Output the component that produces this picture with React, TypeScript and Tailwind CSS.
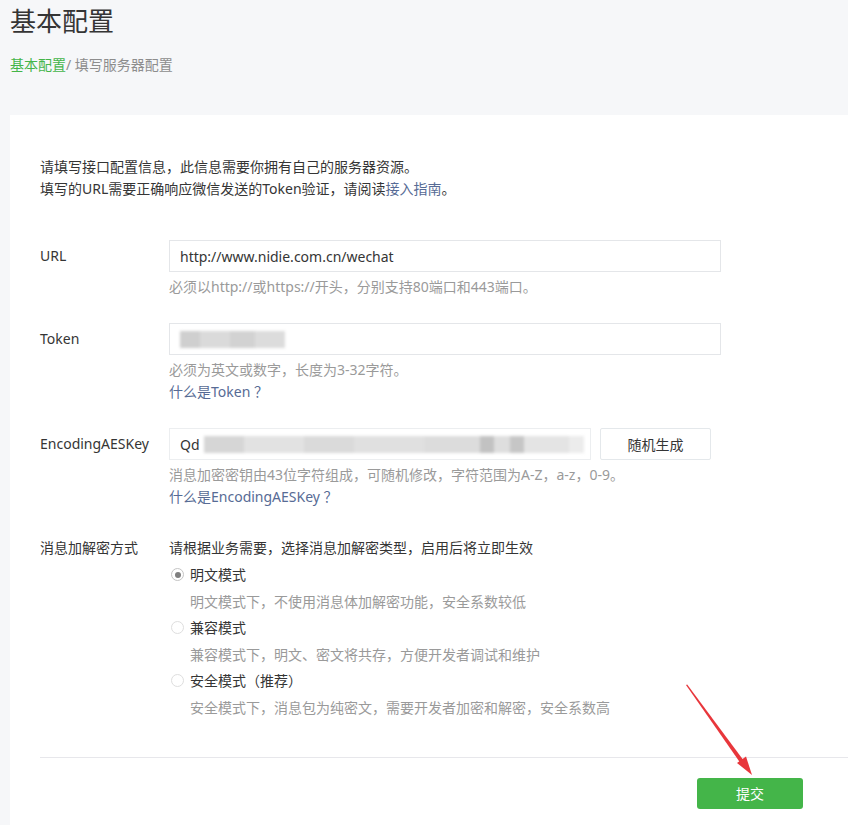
import React from 'react';

const font = { fontFamily: '"Noto Sans", "Noto Sans CJK SC", sans-serif' };

const Radio: React.FC<{ checked?: boolean; label: string; desc: string }> = ({ checked, label, desc }) => (
  <>
    <div className="h-[27px] flex items-center text-[#353535]">
      <span
        className={`w-[13px] h-[13px] rounded-full border flex items-center justify-center mr-[6px] ml-[2px] bg-white ${
          checked ? 'border-[#c4c4c4]' : 'border-[#dedede]'
        }`}
      >
        {checked && <span className="w-[6px] h-[6px] rounded-full bg-[#7f7f7f]" />}
      </span>
      {label}
    </div>
    <div className="h-[26px] flex items-center pl-[21px] text-[#9a9a9a]">{desc}</div>
  </>
);

const Row: React.FC<{ label: string; children: React.ReactNode; className?: string }> = ({ label, children, className }) => (
  <div className={`flex items-start ${className ?? ''}`}>
    <div className="w-[129px] shrink-0 leading-[32px] text-[#353535]">{label}</div>
    <div className="flex flex-col">{children}</div>
  </div>
);

const Hint: React.FC<{ children: React.ReactNode; first?: boolean }> = ({ children, first }) => (
  <div className={`leading-[22px] text-[#9a9a9a] ${first ? 'mt-[4px]' : ''}`}>{children}</div>
);

const App: React.FC = () => {
  return (
    <div className="relative w-[848px] h-[825px] overflow-hidden bg-[#f6f7f9] text-[14px]" style={font}>
      <div className="pl-[10px]">
        <h1 className="mt-[4px] text-[26px] leading-[34px] text-[#353535]">基本配置</h1>
        <div className="mt-[17px] leading-[20px] text-[14px]">
          <span className="text-[#44b549]">基本配置</span>
          <span className="text-[#8d8d8d]">/ 填写服务器配置</span>
        </div>
      </div>

      <div className="ml-[10px] mt-[40px] bg-white pl-[30px] pt-[41px] h-[720px]">
        <div className="leading-[22px] text-[#353535]">
          <p>请填写接口配置信息，此信息需要你拥有自己的服务器资源。</p>
          <p>
            填写的URL需要正确响应微信发送的Token验证，请阅读<span className="text-[#576b95]">接入指南</span>。
          </p>
        </div>

        <Row label="URL" className="mt-[40px]">
          <div className="w-[552px] h-[32px] border border-[#e4e6e9] flex items-center px-[10px] text-[#353535]">
            http://www.nidie.com.cn/wechat
          </div>
          <Hint first>必须以http://或https://开头，分别支持80端口和443端口。</Hint>
        </Row>

        <Row label="Token" className="mt-[25px]">
          <div className="w-[552px] h-[32px] border border-[#e4e6e9] flex items-center px-[10px]">
            <div className="flex h-[17px] blur-[1.5px]">
              <span className="w-[20px] bg-[#cfcfcf]" />
              <span className="w-[30px] bg-[#dadada]" />
              <span className="w-[25px] bg-[#d2d2d2]" />
              <span className="w-[30px] bg-[#dcdcdc]" />
            </div>
          </div>
          <Hint first>必须为英文或数字，长度为3-32字符。</Hint>
          <div className="leading-[22px] text-[#576b95]">什么是Token ？</div>
        </Row>

        <Row label="EncodingAESKey" className="mt-[25px]">
          <div className="flex items-center">
            <div className="w-[422px] h-[32px] border border-[#eceef0] flex items-center pl-[10px] text-[#353535]">
              Qd
              <div className="flex h-[17px] ml-[4px] blur-[1.5px]">
                <span className="w-[40px] bg-[#d6d6d6]" />
                <span className="w-[60px] bg-[#e2e2e2]" />
                <span className="w-[50px] bg-[#dadada]" />
                <span className="w-[70px] bg-[#e0e0e0]" />
                <span className="w-[56px] bg-[#dcdcdc]" />
                <span className="w-[14px] bg-[#c2c2c2]" />
                <span className="w-[16px] bg-[#dedede]" />
                <span className="w-[14px] bg-[#c6c6c6]" />
                <span className="w-[45px] bg-[#e4e4e4]" />
                <span className="w-[15px] bg-[#ececec]" />
              </div>
            </div>
            <button className="ml-[9px] w-[111px] h-[32px] border border-[#e4e8eb] rounded-[2px] bg-white text-[#353535]">
              随机生成
            </button>
          </div>
          <Hint first>消息加密密钥由43位字符组成，可随机修改，字符范围为A-Z，a-z，0-9。</Hint>
          <div className="leading-[22px] text-[#576b95]">什么是EncodingAESKey ？</div>
        </Row>

        <div className="flex items-start mt-[26px]">
          <div className="w-[129px] shrink-0 h-[27px] flex items-center text-[#353535]">消息加解密方式</div>
          <div className="flex flex-col">
            <div className="h-[27px] flex items-center text-[#353535]">请根据业务需要，选择消息加解密类型，启用后将立即生效</div>
            <Radio checked label="明文模式" desc="明文模式下，不使用消息体加解密功能，安全系数较低" />
            <Radio label="兼容模式" desc="兼容模式下，明文、密文将共存，方便开发者调试和维护" />
            <Radio label="安全模式（推荐）" desc="安全模式下，消息包为纯密文，需要开发者加密和解密，安全系数高" />
          </div>
        </div>

        <div className="mt-[37px] h-px bg-[#e7e7eb]" />
        <button className="mt-[20px] ml-[657px] w-[106px] h-[31px] rounded-[3px] bg-[#44b549] text-white text-[14px]">
          提交
        </button>
      </div>

      <svg className="absolute left-0 top-0 pointer-events-none" width="848" height="825">
        <polygon points="686,685 687.2,684.4 743.3,760 740,762.4" fill="#e8363b" />
        <polygon points="752,775 737,763 746,756.5" fill="#e8363b" />
      </svg>
    </div>
  );
};

export default App;
